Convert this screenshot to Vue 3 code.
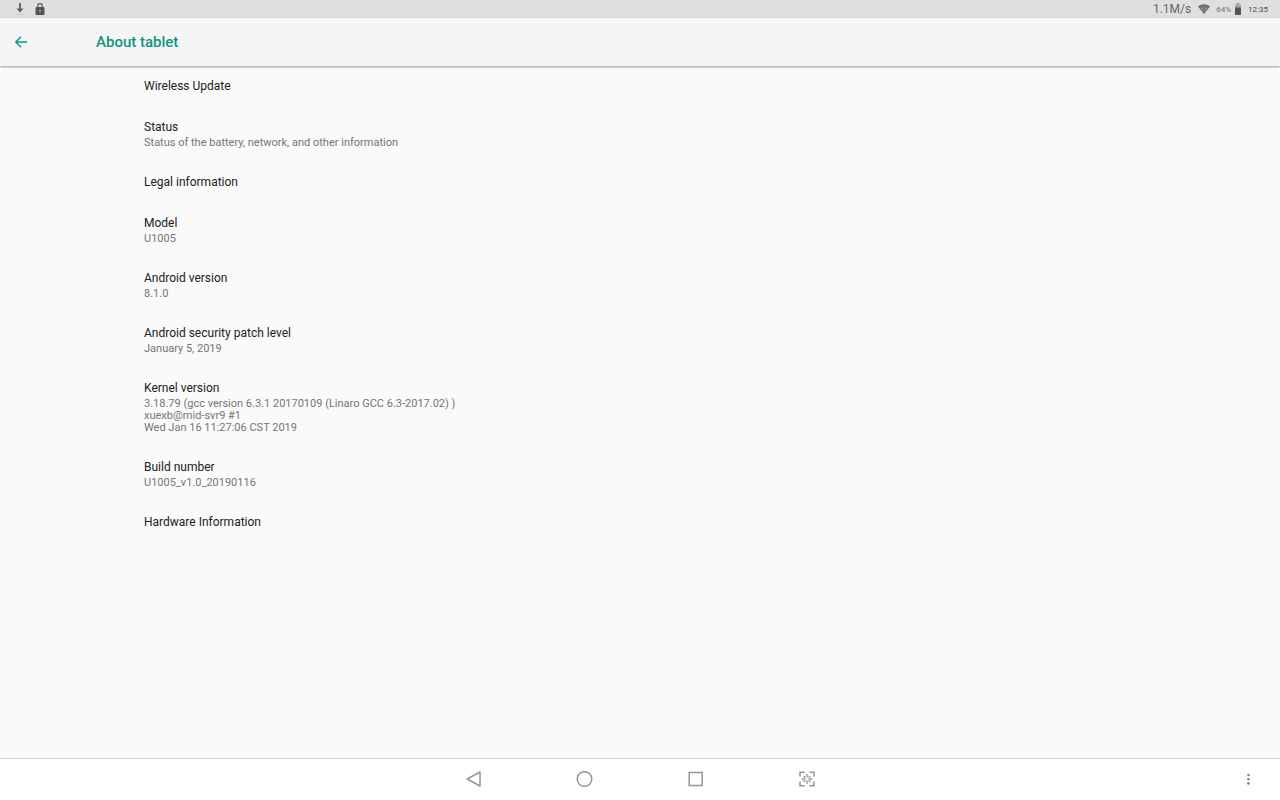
<script setup>
import { ref } from 'vue';

const items = ref([
  { title: 'Wireless Update' },
  { title: 'Status', summary: ['Status of the battery, network, and other information'] },
  { title: 'Legal information' },
  { title: 'Model', summary: ['U1005'] },
  { title: 'Android version', summary: ['8.1.0'] },
  { title: 'Android security patch level', summary: ['January 5, 2019'] },
  {
    title: 'Kernel version',
    summary: [
      '3.18.79 (gcc version 6.3.1 20170109 (Linaro GCC 6.3-2017.02) )',
      'xuexb@mid-svr9 #1',
      'Wed Jan 16 11:27:06 CST 2019'
    ]
  },
  { title: 'Build number', summary: ['U1005_v1.0_20190116'] },
  { title: 'Hardware Information' }
]);
</script>

<template>
  <div class="screen">
    <!-- Status bar -->
    <div class="status-bar">
      <div class="status-left">
        <svg width="12" height="14" viewBox="0 0 12 14" fill="#5a5a5a">
          <path d="M5.100 1h1.800v5.500h2.600L6 10.500 2.500 6.500h2.600z" />
          <path d="M2 12h8v.8H2z" opacity=".2" />
        </svg>
        <svg width="12" height="14" viewBox="0 0 12 14">
          <path d="M3.700 6V4a2.300 2.300 0 0 1 4.600 0v2" fill="none" stroke="#555" stroke-width="1.200" />
          <rect x="1.500" y="5" width="9" height="8" rx="1" fill="#555" />
          <circle cx="6" cy="9" r="1" fill="#aaa" />
        </svg>
      </div>
      <div class="status-right">
        <span class="speed">1.1M/s</span>
        <svg class="wifi" width="14" height="12" viewBox="0 0 14 12">
          <path d="M1 3.500C4.500.5 9.500.5 13 3.500L7 11z" fill="#707070" />
          <path d="M4 5.200h6M5 7.200h4" stroke="#b5b5b5" stroke-width=".8" />
          <path d="M7 4v4.500" stroke="#606060" stroke-width="1" />
        </svg>
        <span class="small battery-text">64%</span>
        <svg class="battery" width="8" height="12" viewBox="0 0 8 12">
          <path d="M2.500 0h3v1.500h-3z" fill="#999" />
          <path d="M1 1.500h6V5H1z" fill="#a5a5a5" />
          <path d="M1 4.500h6V12H1z" fill="#555" />
        </svg>
        <span class="small">12:35</span>
      </div>
    </div>

    <!-- Title bar -->
    <header class="app-bar">
      <button class="back" aria-label="Back">
        <svg width="14" height="14" viewBox="0 0 14 14" fill="none" stroke="#0b9682" stroke-width="1.400">
          <path d="M13 7H2M7 1.800L1.800 7 7 12.200" />
        </svg>
      </button>
      <h1>About tablet</h1>
    </header>

    <!-- Settings list -->
    <main class="content">
      <ul class="list">
        <li v-for="item in items" :key="item.title" class="item">
          <div class="item-title">{{ item.title }}</div>
          <div v-if="item.summary" class="item-summary">
            <div v-for="line in item.summary" :key="line">{{ line }}</div>
          </div>
        </li>
      </ul>
    </main>

    <!-- Navigation bar -->
    <nav class="nav-bar">
      <div class="nav-side"></div>
      <div class="nav-keys">
        <button aria-label="Back">
          <svg width="18" height="18" viewBox="0 0 18 18" fill="none" stroke="#959595" stroke-width="1.500" stroke-linejoin="round">
            <path d="M15 2v14L2.200 9z" />
          </svg>
        </button>
        <button aria-label="Home">
          <svg width="18" height="18" viewBox="0 0 18 18" fill="none" stroke="#959595" stroke-width="1.500">
            <circle cx="8.500" cy="9" r="7.300" />
          </svg>
        </button>
        <button aria-label="Recent apps">
          <svg width="18" height="18" viewBox="0 0 18 18" fill="none" stroke="#959595" stroke-width="1.500">
            <rect x="2.200" y="2.500" width="13" height="13" />
          </svg>
        </button>
        <button aria-label="Screenshot">
          <svg width="18" height="18" viewBox="0 0 18 18" fill="none" stroke="#959595" stroke-width="1.500">
            <path d="M2 6.500V2.200h4.500M11.500 2.200H16v4.300M16 11.500v4.300h-4.500M6.500 15.800H2v-4.300" />
            <path d="M9 4v3.500M9 10.500V14M4 9h3.500M10.500 9H14M5.500 6l2 1.500M12.500 6l-2 1.500M5.500 12l2-1.500M12.500 12l-2-1.500" stroke-width="1.300" />
          </svg>
        </button>
      </div>
      <div class="nav-side">
        <button class="more" aria-label="More options">
          <svg width="6" height="14" viewBox="0 0 6 14" fill="#858585">
            <circle cx="3.500" cy="3" r="1.300" />
            <circle cx="3.500" cy="7.200" r="1.300" />
            <circle cx="3.500" cy="11.400" r="1.300" />
          </svg>
        </button>
      </div>
    </nav>
  </div>
</template>

<style>
body {
  margin: 0;
  background-color: #fafafa;
}
</style>

<style scoped>
.screen {
  display: flex;
  flex-direction: column;
  min-height: 100vh;
  background-color: #fafafa;
  font-family: Roboto, "Liberation Sans", sans-serif;
}

svg {
  display: block;
}

button {
  display: flex;
  align-items: center;
  justify-content: center;
  padding: 0;
  border: none;
  background: none;
  cursor: pointer;
}

.status-bar {
  display: flex;
  align-items: center;
  justify-content: space-between;
  height: 18px;
  padding: 0 12px 0 14px;
  background-color: #dfdfdf;
  color: #666;
}

.status-left {
  display: flex;
  gap: 8px;
}

.status-right {
  display: flex;
  align-items: center;
}

.speed {
  font-size: 12px;
}

.wifi {
  margin: 0 5px 0 6px;
}

.small {
  font-size: 8px;
  color: #505050;
}

.battery-text {
  color: #707070;
}

.battery {
  margin: 0 6px 0 3px;
}

.app-bar {
  display: flex;
  align-items: center;
  height: 48px;
  background-color: #f5f5f5;
  box-shadow: 0 1px 2px rgba(0, 0, 0, 0.4);
}

.back {
  width: 42px;
  height: 48px;
}

h1 {
  margin: 0 0 0 54px;
  font-size: 15px;
  font-weight: 500;
  color: #0b9682;
}

.content {
  flex: 1;
  padding: 0 144px;
}

.list {
  margin: 0;
  padding: 0;
  list-style: none;
}

.item {
  padding: 13px 0;
}

.item-title {
  font-size: 12px;
  line-height: 15px;
  color: #212121;
}

.item-summary {
  margin-top: 2px;
  font-size: 11px;
  line-height: 12px;
  color: #757575;
}

.nav-bar {
  display: flex;
  height: 40px;
  padding-bottom: 1px;
  border-top: 1px solid #d5d5d5;
  background-color: #fff;
}

.nav-side {
  display: flex;
  flex: 1;
  justify-content: flex-end;
}

.nav-keys {
  display: flex;
}

.nav-keys button {
  width: 111px;
}

.more {
  width: 64px;
}
</style>
